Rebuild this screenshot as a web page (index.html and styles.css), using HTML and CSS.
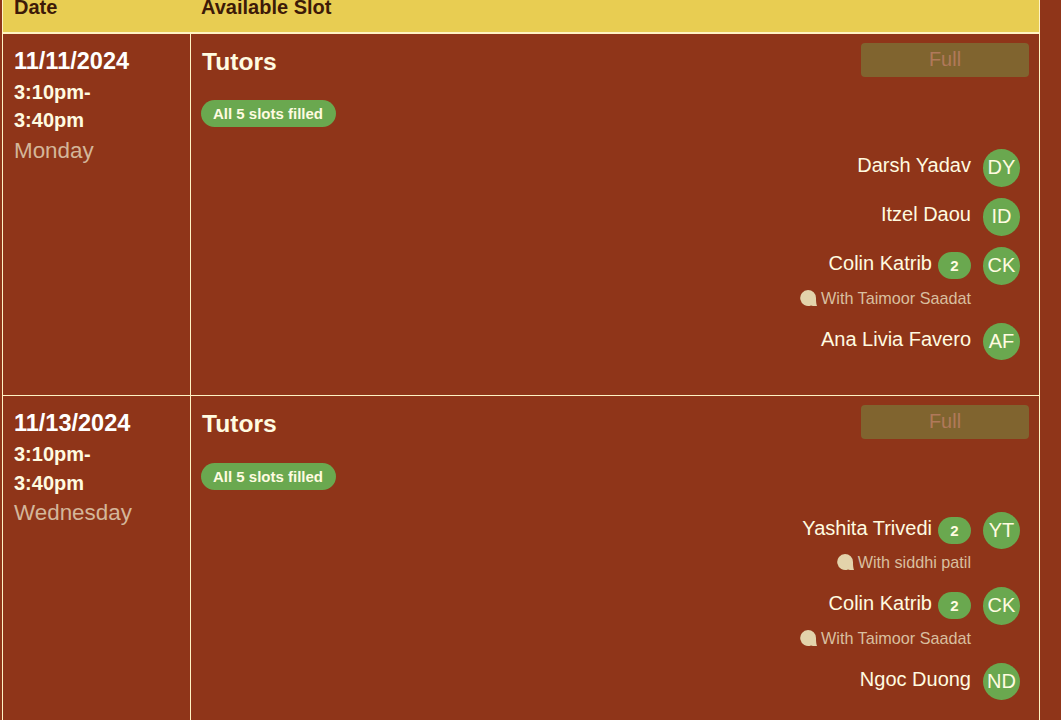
FILE: index.html
```html
<!DOCTYPE html>
<html lang="en">
<head>
<meta charset="utf-8">
<title>Tutor slots</title>
<link rel="stylesheet" href="styles.css">
</head>
<body>
<div class="table">
  <div class="head">
    <div class="head-date">Date</div>
    <div class="head-slot">Available Slot</div>
  </div>

  <div class="row">
    <div class="date-cell">
      <div class="date">11/11/2024</div>
      <div class="time">3:10pm-<br>3:40pm</div>
      <div class="day">Monday</div>
    </div>
    <div class="slot-cell">
      <div class="slot-top">
        <div class="role">Tutors</div>
        <button class="full" disabled>Full</button>
      </div>
      <div class="filled">All 5 slots filled</div>
      <div class="people">
        <div class="person">
          <div class="info"><div class="name-line"><span class="name">Darsh Yadav</span></div></div>
          <div class="avatar">DY</div>
        </div>
        <div class="person">
          <div class="info"><div class="name-line"><span class="name">Itzel Daou</span></div></div>
          <div class="avatar">ID</div>
        </div>
        <div class="person">
          <div class="info">
            <div class="name-line"><span class="name">Colin Katrib</span><span class="count">2</span></div>
            <div class="with">
              <svg class="bubble" viewBox="0 0 17 17"><path d="M8 0a8 8 0 0 1 8 8c0 3 .2 5.600 1 8-2 .2-4 .2-6-.5A8 8 0 1 1 8 0z"/></svg>
              <span>With Taimoor Saadat</span>
            </div>
          </div>
          <div class="avatar">CK</div>
        </div>
        <div class="person">
          <div class="info"><div class="name-line"><span class="name">Ana Livia Favero</span></div></div>
          <div class="avatar">AF</div>
        </div>
      </div>
    </div>
  </div>

  <div class="row">
    <div class="date-cell">
      <div class="date">11/13/2024</div>
      <div class="time">3:10pm-<br>3:40pm</div>
      <div class="day">Wednesday</div>
    </div>
    <div class="slot-cell">
      <div class="slot-top">
        <div class="role">Tutors</div>
        <button class="full" disabled>Full</button>
      </div>
      <div class="filled">All 5 slots filled</div>
      <div class="people">
        <div class="person">
          <div class="info">
            <div class="name-line"><span class="name">Yashita Trivedi</span><span class="count">2</span></div>
            <div class="with">
              <svg class="bubble" viewBox="0 0 17 17"><path d="M8 0a8 8 0 0 1 8 8c0 3 .2 5.600 1 8-2 .2-4 .2-6-.5A8 8 0 1 1 8 0z"/></svg>
              <span>With siddhi patil</span>
            </div>
          </div>
          <div class="avatar">YT</div>
        </div>
        <div class="person">
          <div class="info">
            <div class="name-line"><span class="name">Colin Katrib</span><span class="count">2</span></div>
            <div class="with">
              <svg class="bubble" viewBox="0 0 17 17"><path d="M8 0a8 8 0 0 1 8 8c0 3 .2 5.600 1 8-2 .2-4 .2-6-.5A8 8 0 1 1 8 0z"/></svg>
              <span>With Taimoor Saadat</span>
            </div>
          </div>
          <div class="avatar">CK</div>
        </div>
        <div class="person">
          <div class="info"><div class="name-line"><span class="name">Ngoc Duong</span></div></div>
          <div class="avatar">ND</div>
        </div>
      </div>
    </div>
  </div>
</div>
</body>
</html>
```
FILE: styles.css
```css
html, body {
  margin: 0;
  height: 720px;
  overflow: hidden;
  background: #8f3519;
}
body {
  font-family: "Liberation Sans", Arial, sans-serif;
  color: #fffbe0;
}
.table {
  width: 1038px;
  margin-left: 2px;
  border-right: 1px solid #fff3c4;
  border-left: 1px solid #fff3c4;
  box-sizing: border-box;
}
.head {
  display: grid;
  grid-template-columns: 188px 1fr;
  height: 34px;
  box-sizing: border-box;
  background: #e8cd52;
  border-bottom: 2px solid #fff3c4;
  color: #3d1a08;
  font-size: 20px;
  font-weight: 700;
  line-height: 14px;
}
.head-date { padding-left: 11px; }
.head-slot { padding-left: 10px; }
.row {
  display: grid;
  grid-template-columns: 188px 1fr;
  border-bottom: 1px solid #fff3c4;
  height: 362.4px;
  box-sizing: border-box;
}
.row + .row { height: 400px; }
.date-cell {
  border-right: 1px solid #fff3c4;
  padding: 14px 11px 0;
}
.date { font-size: 23.5px; font-weight: 700; line-height: 26px; color: #fff; }
.time { font-size: 20px; font-weight: 700; line-height: 28.7px; margin-top: 3.5px; }
.day { font-size: 22.4px; line-height: 26px; color: #d4b699; margin-top: 3px; }
.slot-cell { padding: 9px 10px 0; }
.slot-top {
  display: flex;
  justify-content: space-between;
  align-items: flex-start;
}
.role { font-size: 24.6px; font-weight: 700; line-height: 28px; margin-top: 5px; padding-left: 1px; }
.full {
  width: 168px;
  height: 34px;
  border: 0;
  border-radius: 4px;
  padding: 0 0 2px;
  background: #80642f;
  color: #b0795a;
  font: 20px "Liberation Sans", Arial, sans-serif;
}
.filled {
  width: fit-content;
  margin-top: 23.2px;
  padding: 0 13px 0 12px;
  height: 27px;
  line-height: 27px;
  border-radius: 14px;
  background: #6aa84f;
  font-size: 15px;
  font-weight: 700;
}
.people { margin-top: 22px; padding-right: 9px; }
.person {
  display: flex;
  justify-content: flex-end;
  gap: 12px;
  margin-bottom: 11.6px;
}
.info { display: flex; flex-direction: column; align-items: flex-end; }
.name-line { display: flex; gap: 6px; height: 34px; }
.name { font-size: 20px; line-height: 33px; }
.count {
  width: 33px;
  height: 27px;
  margin-top: 5px;
  border-radius: 14px;
  background: #6aa84f;
  text-align: center;
  font-size: 15px;
  font-weight: 700;
  line-height: 27px;
}
.with {
  display: flex;
  align-items: center;
  gap: 4px;
  height: 20px;
  margin-top: 7px;
  margin-bottom: 3px;
  font-size: 16.2px;
  color: #d9bf9f;
}
.bubble { width: 17px; height: 17px; fill: #e3d3ab; }
.avatar {
  flex: none;
  width: 37px;
  height: 37.4px;
  border-radius: 50%;
  background: #6aa84f;
  text-align: center;
  font-size: 20px;
  line-height: 37px;
}
```
